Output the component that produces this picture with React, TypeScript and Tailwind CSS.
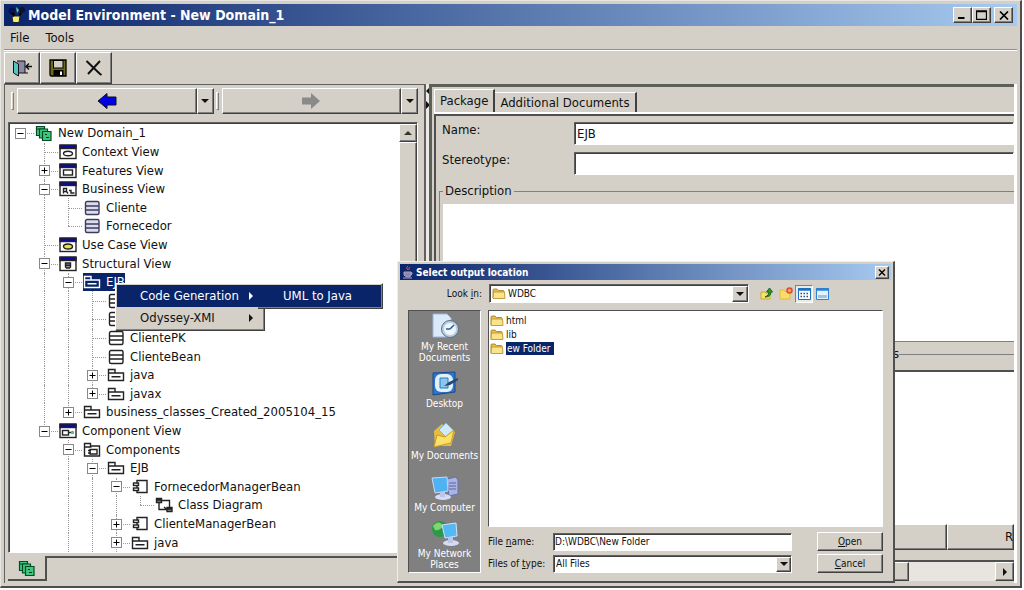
import { useState } from 'react';
import type { ReactNode } from 'react';
import { clsx } from 'clsx';

type IconName =
    | 'domain' | 'context' | 'features' | 'business' | 'usecase' | 'structural' | 'component'
    | 'entity' | 'class' | 'package' | 'components' | 'bean' | 'diagram';

interface TreeNode {
    level: number;
    icon: IconName;
    label: string;
    toggle?: '+' | '-';
    selected?: boolean;
}

const nodes: TreeNode[] = [
    { level: 0, icon: 'domain', label: 'New Domain_1', toggle: '-' },
    { level: 1, icon: 'context', label: 'Context View' },
    { level: 1, icon: 'features', label: 'Features View', toggle: '+' },
    { level: 1, icon: 'business', label: 'Business View', toggle: '-' },
    { level: 2, icon: 'entity', label: 'Cliente' },
    { level: 2, icon: 'entity', label: 'Fornecedor' },
    { level: 1, icon: 'usecase', label: 'Use Case View' },
    { level: 1, icon: 'structural', label: 'Structural View', toggle: '-' },
    { level: 2, icon: 'package', label: 'EJB', toggle: '-', selected: true },
    { level: 3, icon: 'class', label: '' },
    { level: 3, icon: 'class', label: '' },
    { level: 3, icon: 'class', label: 'ClientePK' },
    { level: 3, icon: 'class', label: 'ClienteBean' },
    { level: 3, icon: 'package', label: 'java', toggle: '+' },
    { level: 3, icon: 'package', label: 'javax', toggle: '+' },
    { level: 2, icon: 'package', label: 'business_classes_Created_2005104_15', toggle: '+' },
    { level: 1, icon: 'component', label: 'Component View', toggle: '-' },
    { level: 2, icon: 'components', label: 'Components', toggle: '-' },
    { level: 3, icon: 'package', label: 'EJB', toggle: '-' },
    { level: 4, icon: 'bean', label: 'FornecedorManagerBean', toggle: '-' },
    { level: 5, icon: 'diagram', label: 'Class Diagram' },
    { level: 4, icon: 'bean', label: 'ClienteManagerBean', toggle: '+' },
    { level: 4, icon: 'package', label: 'java', toggle: '+' },
];

// true when a later sibling exists at this level, so the guide keeps going down
function continues(index: number, level: number) {
    for (let i = index + 1; i < nodes.length; i++) {
        if (nodes[i].level < level) return false;
        if (nodes[i].level === level) return true;
    }
    // the list goes on below the visible part
    return level > 1 && level < 5;
}

const raised = 'border border-t-white border-l-white border-r-[#404040] border-b-[#404040] shadow-[inset_-1px_-1px_0_#808080] bg-[#d4d0c8]';
const sunken = 'border border-t-[#606060] border-l-[#606060] border-r-white border-b-white shadow-[inset_1px_1px_0_#404040] bg-white';

function ViewFrame({ children }: { children: ReactNode }) {
    return (
        <>
            <rect x="1" y="1.5" width="16" height="13" fill="#fff" stroke="#222" strokeWidth="1.4" />
            <rect x="1" y="1" width="16" height="3.5" fill="#0a0aa8" />
            {children}
        </>
    );
}

function DomainShapes() {
    return (
        <g stroke="#064a25" fill="#3fc77e" strokeWidth="1.2">
            <path d="M1.5 1.5h8v9h-8z M1.5 4h8" />
            <path d="M4.5 4h8v9h-8z" />
            <path d="M7.500 6.500h8.500v9h-8.500z" />
            <path d="M10 9.500h2 M11 12.500h3" stroke="#033" />
        </g>
    );
}

function TreeIcon({ name, selected }: { name: IconName; selected?: boolean }) {
    const ink = selected ? '#fff' : '#222';
    return (
        <svg width="18" height="16" viewBox="0 0 18 16" fill="none" stroke={ink} strokeWidth="1.4" className="shrink-0">
            {name === 'domain' && <DomainShapes />}
            {name === 'context' && <ViewFrame><ellipse cx="9" cy="9.500" rx="4.500" ry="2.300" /></ViewFrame>}
            {name === 'usecase' && <ViewFrame><ellipse cx="9" cy="9.500" rx="4.500" ry="2.500" fill="#e8e23a" /></ViewFrame>}
            {name === 'features' && <ViewFrame><rect x="4.500" y="7" width="9" height="5" /></ViewFrame>}
            {name === 'business' && <ViewFrame><path d="M4.500 12.500v-5h3v3h-3M7.500 10.500l1.500 2M10 9.500h2v2.500h3.500" /></ViewFrame>}
            {name === 'structural' && <ViewFrame><path d="M6.500 7h5v4l-1 1h-3l-1-1zM6.500 9.300h5" fill="#999" /></ViewFrame>}
            {name === 'component' && (
                <ViewFrame>
                    <rect x="3.500" y="7.500" width="6" height="4.500" />
                    <path d="M10 9.500h2.500" />
                    <circle cx="13.500" cy="9.500" r="1" stroke="#4b7" />
                </ViewFrame>
            )}
            {name === 'entity' && (
                <>
                    <rect x="2.500" y="1.500" width="13.500" height="13" rx="1.500" fill="#dcdcf0" stroke="#3c3c58" />
                    <path d="M2.500 6h13.500M2.500 10h13.500" stroke="#3c3c58" />
                </>
            )}
            {name === 'class' && (
                <>
                    <rect x="2.500" y="1.500" width="13.500" height="13" rx="1.500" fill="#fff" />
                    <path d="M2.500 6h13.500M2.500 10h13.500" />
                </>
            )}
            {name === 'package' && <path d="M1.500 13.500v-11h6.500v3.500h8.500v7.500zM1.500 6h7M4.500 9.700h9" />}
            {name === 'components' && (
                <>
                    <path d="M1.500 14v-12.500h6v2.500h9v10zM1.500 5h7" />
                    <path d="M7 7.500h7v4.500h-7zM5 8.500h3M5 11h3" />
                </>
            )}
            {name === 'bean' && (
                <>
                    <path d="M6 4.500v-3h10v12h-10v-2M6 6.500v2.500" />
                    <rect x="2.500" y="4" width="5" height="2.500" />
                    <rect x="2.500" y="9" width="5" height="2.500" />
                </>
            )}
            {name === 'diagram' && (
                <>
                    <path d="M1.500 1.500h5v4h-5zM1.500 3h5M12 10.500h5v4h-5zM12 12h5" fill="#888" />
                    <path d="M6.500 3.500h8v7M4 6v6.500h8M9 10l3 2.500" />
                </>
            )}
        </svg>
    );
}

function TreeRow({ node, index }: { node: TreeNode; index: number }) {
    const columns = Array.from({ length: node.level }, (_, i) => i);
    return (
        <li className="flex min-h-[18px] items-center whitespace-nowrap leading-[18px]">
            {columns.map((col) => (
                <span key={col} className="flex w-6 shrink-0 self-stretch pl-3">
                    {col > 0 && continues(index, col) && <span className="border-l border-dotted border-[#999]" />}
                </span>
            ))}
            <span className="relative flex w-6 shrink-0 items-center justify-center self-stretch">
                {node.level > 0 && (
                    <span
                        className={clsx(
                            'absolute left-3 top-0 border-l border-dotted border-[#999]',
                            continues(index, node.level) ? 'h-full' : 'h-1/2',
                        )}
                    />
                )}
                <span className="absolute left-3 top-1/2 w-4 border-t border-dotted border-[#999]" />
                {node.toggle && (
                    <button
                        type="button"
                        aria-label={node.toggle === '+' ? 'Expand' : 'Collapse'}
                        className="relative flex size-[11px] items-center justify-center border border-[#888] bg-white"
                    >
                        <svg width="7" height="7" viewBox="0 0 7 7" stroke="#000" strokeWidth="1">
                            <path d={node.toggle === '+' ? 'M0.5 3.5h6M3.5 0.5v6' : 'M0.5 3.5h6'} />
                        </svg>
                    </button>
                )}
            </span>
            <span
                className={clsx(
                    'relative ml-[3px] flex items-center gap-[5px] self-stretch',
                    node.selected ? 'bg-[#0a246a] text-white' : 'bg-white',
                )}
            >
                <TreeIcon name={node.icon} selected={node.selected} />
                {node.label}
            </span>
        </li>
    );
}

function Triangle({ dir, className }: { dir: 'up' | 'down' | 'left' | 'right'; className?: string }) {
    const paths = {
        up: 'M0 6L4 2L8 6z',
        down: 'M0 2h8L4 6z',
        left: 'M6 0v8L2 4z',
        right: 'M2 0v8L6 4z',
    };
    return (
        <svg width="8" height="8" viewBox="0 0 8 8" className={clsx('shrink-0', className)}>
            <path d={paths[dir]} fill="currentColor" />
        </svg>
    );
}

function FolderIcon() {
    return (
        <svg width="14" height="13" viewBox="0 0 14 13" className="shrink-0">
            <path d="M1 11V3q0-1 1-1h3l1.500 1.500H11q1 0 1 1V11z" fill="#e9bf4c" stroke="#a07a1c" strokeWidth=".8" />
            <path d="M1 11.500L1.500 5h11l.5 6.500z" fill="#fbe38c" stroke="#b58e2b" strokeWidth=".8" />
        </svg>
    );
}

function TitleBar() {
    return (
        <header className="flex h-[22px] items-center gap-[2px] bg-linear-to-r/srgb from-[#0a246a] to-[#a6caf0] pr-1 pl-1 text-white">
            <svg width="18" height="18" viewBox="0 0 18 18">
                <circle cx="4" cy="5" r="3.500" fill="#0c1250" />
                <circle cx="14" cy="4" r="3" fill="#101430" />
                <path d="M8 1l3 3-2 3z" fill="#5fc9a0" />
                <path d="M4 7l3 3M13 7l-2 3" stroke="#000" strokeWidth="2" />
                <path d="M4 11.500l2-1.500h6l-1 6.500h-6z" fill="#f2ee7a" stroke="#222" />
            </svg>
            <h1 className="flex-1 text-[14px] font-bold">Model Environment - New Domain_1</h1>
            <div className="flex text-black">
                <button type="button" aria-label="Minimize" className={clsx(raised, 'flex h-4 w-[19px] items-center justify-center')}>
                    <svg width="11" height="10" viewBox="0 0 11 10"><path d="M1 8h6.500" stroke="#000" strokeWidth="2" /></svg>
                </button>
                <button type="button" aria-label="Maximize" className={clsx(raised, 'flex h-4 w-[19px] items-center justify-center')}>
                    <svg width="11" height="10" viewBox="0 0 11 10" fill="none" stroke="#000"><path d="M.5 1h10v8.500H.5zM.5 1.500h10" strokeWidth="1.300" /></svg>
                </button>
                <button type="button" aria-label="Close" className={clsx(raised, 'ml-[3px] flex h-4 w-[19px] items-center justify-center')}>
                    <svg width="10" height="9" viewBox="0 0 10 9"><path d="M1 .5l8 8M9 .5l-8 8" stroke="#000" strokeWidth="1.700" /></svg>
                </button>
            </div>
        </header>
    );
}

function ToolBar() {
    return (
        <div className="flex h-[34px] border-t border-white pt-px">
            <button type="button" aria-label="Exit" className={clsx(raised, 'flex w-9 items-center justify-center')}>
                <svg width="22" height="18" viewBox="0 0 22 18">
                    <path d="M6 2h8v12H6" fill="#8a8aa8" stroke="#111" />
                    <path d="M2.500 2l5 3v12l-5-3z" fill="#53c4c4" stroke="#111" />
                    <path d="M14 14h3" stroke="#111" />
                    <path d="M15 7.500h6M18 4.500l-3 3 3 3" stroke="#111" strokeWidth="1.500" fill="none" />
                </svg>
            </button>
            <button type="button" aria-label="Save" className={clsx(raised, 'flex w-9 items-center justify-center')}>
                <svg width="18" height="18" viewBox="0 0 18 18">
                    <path d="M1 1h16v16H2l-1-1z" fill="#6b6a1e" stroke="#000" strokeWidth="1.300" />
                    <rect x="4.500" y="1.500" width="9.500" height="7.500" fill="#d4d0c8" stroke="#000" />
                    <rect x="4.500" y="11" width="10" height="6" fill="#000" />
                    <rect x="11" y="12.500" width="2" height="3.500" fill="#fff" />
                </svg>
            </button>
            <button type="button" aria-label="Delete" className={clsx(raised, 'flex w-9 items-center justify-center')}>
                <svg width="18" height="16" viewBox="0 0 18 16"><path d="M1.500 1l13 12.500 2 1.500M15 1L3 14" stroke="#111" strokeWidth="2" fill="none" /></svg>
            </button>
        </div>
    );
}

function NavButton({ forward }: { forward?: boolean }) {
    return (
        <div className="flex flex-1 gap-[3px]">
            <span className="my-1 w-[3px] border border-t-white border-l-white border-r-[#808080] border-b-[#808080]" />
            <div className="flex flex-1">
                <button type="button" aria-label={forward ? 'Forward' : 'Back'} className={clsx(raised, 'flex flex-1 items-center justify-center')}>
                    <svg width="20" height="18" viewBox="0 0 20 18">
                        {forward ? (
                            <path d="M1 5.500h9V1l9 8-9 8v-4.500H1z" fill="#8a8a8a" />
                        ) : (
                            <path d="M19 5h-9V1.500L1 9l9 7.500v-3.500h9z" fill="#0000e8" stroke="#111" />
                        )}
                    </svg>
                </button>
                <button type="button" aria-label="History" className={clsx(raised, 'flex w-[17px] items-center justify-center')}>
                    <Triangle dir="down" />
                </button>
            </div>
        </div>
    );
}

function BrowserPane() {
    return (
        <section className="flex w-[420px] shrink-0 flex-col border-t border-l border-[#606060] pt-[3px] pl-[3px]">
            <div className="mr-[6px] mb-2 flex h-[26px] gap-[2px] pl-[3px]">
                <NavButton />
                <NavButton forward />
            </div>
            <div className={clsx(sunken, 'mr-[6px] flex flex-1 pt-px')}>
                <ul className="-ml-px grid flex-1 auto-rows-fr overflow-hidden">
                    {nodes.map((node, i) => (
                        <TreeRow key={i} node={node} index={i} />
                    ))}
                </ul>
                <div className="w-[18px] bg-[#e4e1dc]">
                    <button type="button" aria-label="Scroll up" className={clsx(raised, 'flex h-[18px] w-full items-center justify-center text-[#333]')}>
                        <Triangle dir="up" />
                    </button>
                    <div className={clsx(raised, 'h-80')} />
                </div>
            </div>
            <div className="mt-[3px] flex h-[27px] items-start">
                <button type="button" aria-label="Domain" className="flex h-[25px] w-[39px] items-center justify-center border-r-2 border-b-2 border-[#505050]">
                    <svg width="18" height="16" viewBox="0 0 18 16"><DomainShapes /></svg>
                </button>
                <span className="flex-1 border-t-2 border-[#505050]" />
            </div>
        </section>
    );
}

function PropertiesPane() {
    const [name, setName] = useState('EJB');
    const [stereotype, setStereotype] = useState('');
    return (
        <section className="flex min-w-0 flex-1 flex-col border-t-3 border-l-3 border-[#5c6058] pt-[2px] pl-[2px]">
            <div role="tablist" className="flex h-[23px] items-end pr-1">
                <button type="button" role="tab" aria-selected="true" className="h-full border-t border-l border-r-2 border-t-white border-l-white border-r-[#404040] px-[5px]">
                    Package
                </button>
                <button type="button" role="tab" aria-selected="false" className="h-[20px] border-t border-r-2 border-t-white border-r-[#404040] px-[5px]">
                    Additional Documents
                </button>
            </div>
            <div className="flex flex-1 flex-col border-t-2 border-white">
                <div className="flex flex-1 flex-col border-t-2 border-l-2 border-[#505050] pt-[6px] pl-[3px]">
                    <div className="grid grid-cols-[132px_1fr] gap-y-[7px] pl-[3px]">
                        <label htmlFor="name">Name:</label>
                        <input id="name" value={name} onChange={(e) => setName(e.target.value)} className={clsx(sunken, 'h-[23px] min-w-0 rounded-none px-[2px] outline-none')} />
                        <label htmlFor="stereotype">Stereotype:</label>
                        <input id="stereotype" value={stereotype} onChange={(e) => setStereotype(e.target.value)} className={clsx(sunken, 'h-[23px] min-w-0 rounded-none px-[2px] outline-none')} />
                    </div>
                    <fieldset className="mt-2 border-t border-l border-[#808080] pl-[3px]">
                        <legend className="px-0.5 leading-[16px]">Description</legend>
                        <textarea aria-label="Description" className="mt-[5px] block h-[138px] w-full resize-none border-b border-[#808080] bg-white outline-none" />
                    </fieldset>
                    <fieldset className="mt-1 flex-1 border-t border-l border-[#808080] pl-[3px]">
                        <legend className="ml-[446px] pl-[4px] leading-[16px]">s</legend>
                        <div className="mt-2 h-[154px] border-t-2 border-[#505050] bg-white" />
                        <div className="flex h-[26px]">
                            <button type="button" aria-label="Add" className={clsx(raised, 'w-[504px]')} />
                            <button type="button" className={clsx(raised, 'flex-1 overflow-hidden pr-0 text-right')}>
                                R
                            </button>
                        </div>
                    </fieldset>
                    <div className="mb-[2px] flex h-[21px] border-t-2 border-[#505050] bg-[#e8e5e0]">
                        <div className={clsx(raised, 'w-[470px]')} />
                        <span className="flex-1" />
                        <button type="button" aria-label="Scroll right" className={clsx(raised, 'flex w-[19px] items-center justify-center')}>
                            <Triangle dir="right" />
                        </button>
                    </div>
                </div>
            </div>
        </section>
    );
}

function ContextMenu() {
    return (
        <div className="absolute top-[283px] left-[115px] flex items-start">
            <div role="menu" className={clsx(raised, 'w-[150px] p-px')}>
                <button type="button" role="menuitem" className="flex h-[22px] w-full items-center justify-between bg-[#0a246a] pr-2 pl-[23px] text-white">
                    Code Generation
                    <Triangle dir="right" />
                </button>
                <button type="button" role="menuitem" className="flex h-[22px] w-full items-center justify-between pr-2 pl-[23px]">
                    Odyssey-XMI
                    <Triangle dir="right" />
                </button>
            </div>
            <div role="menu" className={clsx(raised, '-ml-[7px] w-[125px] border-l-0 py-px pr-px')}>
                <button type="button" role="menuitem" className="h-[22px] w-full bg-[#0a246a] pl-[25px] text-left text-white">
                    UML to Java
                </button>
            </div>
        </div>
    );
}

function PlaceIcon({ name }: { name: string }) {
    return (
        <svg width="30" height="28" viewBox="0 0 30 28" className="shrink-0">
            {name === 'recent' && (
                <>
                    <path d="M3 1h14l4 4v19H3z" fill="#dce9fb" stroke="#9db5dc" />
                    <circle cx="20" cy="16" r="8.500" fill="#b9cfe2" stroke="#5a6f86" />
                    <circle cx="20" cy="16" r="6" fill="#eef6fb" />
                    <path d="M20 16l4-4M20 16h-4" stroke="#1f5fa8" strokeWidth="1.500" />
                </>
            )}
            {name === 'desktop' && (
                <>
                    <path d="M3 3l22-1v20l-22 3z" fill="#2f74c8" stroke="#174a90" />
                    <rect x="5" y="4" width="18" height="18" rx="6" fill="#dff1fb" />
                    <path d="M10 8h8v10h-8z" fill="#8cc6ea" stroke="#2b78b8" />
                    <path d="M28 8l-9 4-5 4 6-1 8-5z" fill="#24456f" />
                </>
            )}
            {name === 'documents' && (
                <>
                    <path d="M4 9l8-7 4 3 9 5-4 14H5z" fill="#e8bd3f" />
                    <path d="M9 8l7-7 8 8-5 9z" fill="#cfe9fa" stroke="#86b6da" />
                    <path d="M4 25L7 13l8 2 9-7-3 13z" fill="#fbe06a" stroke="#c79c26" />
                </>
            )}
            {name === 'computer' && (
                <>
                    <path d="M17 5l9-2 2 3v14l-9 2z" fill="#a9b4e4" stroke="#6470a8" />
                    <path d="M19 9h7M19 12h7M19 15h7" stroke="#5a64a0" />
                    <path d="M2 4l15-1 1 14-13 2z" fill="#4fb2f2" stroke="#c8d8f4" />
                    <ellipse cx="13" cy="23" rx="8" ry="3" fill="#d5dcf5" />
                    <path d="M10 18h5v5h-5z" fill="#bcc6e8" />
                </>
            )}
            {name === 'network' && (
                <>
                    <circle cx="10" cy="9" r="8" fill="#2a9a4a" />
                    <path d="M3 6q6-7 10 0-3 5-8 4z" fill="#7fd66b" />
                    <path d="M12 5l14-2 1 13-12 2z" fill="#54b8f4" stroke="#d2e3f8" />
                    <ellipse cx="21" cy="23" rx="8" ry="3" fill="#d5dcf5" />
                    <path d="M18 17h5v6h-5z" fill="#bcc6e8" />
                </>
            )}
        </svg>
    );
}

const places = [
    { icon: 'recent', label: 'My Recent Documents', box: 'h-[57px]' },
    { icon: 'desktop', label: 'Desktop', box: 'h-[52px]' },
    { icon: 'documents', label: 'My Documents', box: 'h-[52px]' },
    { icon: 'computer', label: 'My Computer', box: 'h-[46px]' },
    { icon: 'network', label: 'My Network Places', box: 'h-[52px]' },
];

function OutputDialog() {
    const [fileName, setFileName] = useState('D:\\WDBC\\New Folder');
    return (
        <div
            role="dialog"
            aria-label="Select output location"
            className="absolute top-[261px] left-[397px] w-[498px] border-t border-r-2 border-b-2 border-l border-t-[#eee] border-r-[#505050] border-b-[#505050] border-l-[#eee] bg-[#d4d0c8] p-[2px] pb-2 text-[10px] leading-[11px]"
        >
            <div className="flex h-4 items-center gap-[2px] bg-linear-to-r/srgb from-[#0a246a] to-[#a6caf0] px-[2px] text-white">
                <svg width="12" height="14" viewBox="0 0 12 14" fill="none">
                    <path d="M6 1q-3 2 0 4M8 2q-2 2-1 3" stroke="#e0553a" />
                    <path d="M2 7h7v3q0 2-3 2t-4-2zM9 7.500q2.500 0 0 2.500M1 13h9" stroke="#a9a0c8" fill="#8f86b0" />
                </svg>
                <h2 className="flex-1 font-bold">Select output location</h2>
                <button type="button" aria-label="Close dialog" className={clsx(raised, 'flex h-[13px] w-[14px] items-center justify-center')}>
                    <svg width="8" height="7" viewBox="0 0 8 7"><path d="M1 .5l6 6M7 .5l-6 6" stroke="#000" strokeWidth="1.400" /></svg>
                </button>
            </div>
            <div className="mt-1 flex h-[19px] items-center pr-2">
                <label htmlFor="look-in" className="w-[82px] text-right">
                    Look <u>i</u>n:
                </label>
                <div className="relative ml-[7px] w-[260px]">
                    <select id="look-in" className={clsx(sunken, 'h-[19px] w-full appearance-none rounded-none pl-[18px] outline-none')}>
                        <option>WDBC</option>
                    </select>
                    <span className="pointer-events-none absolute top-[3px] left-[3px]"><FolderIcon /></span>
                    <span className={clsx(raised, 'pointer-events-none absolute top-[2px] right-px flex h-4 w-4 items-center justify-center')}>
                        <Triangle dir="down" />
                    </span>
                </div>
                <div className="ml-2 flex items-center">
                    <button type="button" aria-label="Up one level" className="flex size-[19px] items-center justify-center">
                        <svg width="13" height="13" viewBox="0 0 13 13">
                            <path d="M1 5h4l1 1h4v6H1z" fill="#f5e26a" stroke="#c9a92e" />
                            <path d="M5 10q4-1 4-5H6.500L9.500 1l3 4H11q0 5-6 5z" fill="#2f9a2f" stroke="#136813" />
                        </svg>
                    </button>
                    <button type="button" aria-label="New folder" className="flex size-[19px] items-center justify-center">
                        <svg width="14" height="13" viewBox="0 0 14 13">
                            <path d="M1 3h4l1 1.500h5V12H1z" fill="#f8dc6c" stroke="#e5b840" />
                            <circle cx="10.500" cy="3.500" r="2.500" fill="#f7a070" stroke="#e04a28" strokeWidth="1.500" />
                        </svg>
                    </button>
                    <button type="button" aria-label="List" aria-pressed="true" className="flex size-[18px] items-center justify-center border border-t-[#808080] border-l-[#808080] border-r-white border-b-white bg-[#eceae6]">
                        <svg width="13" height="12" viewBox="0 0 13 12">
                            <path d="M.5.5h12v11H.5z" fill="#fff" stroke="#1e6fc0" />
                            <path d="M0 1.500h13" stroke="#1e6fc0" strokeWidth="2.500" />
                            <path d="M2.500 5.500h8M2.500 8.500h8" stroke="#1c4f8c" strokeWidth="1.500" strokeDasharray="1.500 1.500" />
                        </svg>
                    </button>
                    <button type="button" aria-label="Details" className="flex size-[19px] items-center justify-center">
                        <svg width="13" height="12" viewBox="0 0 13 12">
                            <path d="M.5.5h12v11H.5z" fill="#e4f2fd" stroke="#2f80d4" />
                            <path d="M0 1.500h13" stroke="#2f80d4" strokeWidth="2.500" />
                            <path d="M2 8.500h9" stroke="#9cc4ea" strokeWidth="3" />
                        </svg>
                    </button>
                </div>
            </div>
            <div className="mt-[7px] flex gap-[7px] pr-2 pl-2">
                <nav className="flex h-[263px] w-[73px] shrink-0 flex-col border border-t-[#505050] border-l-[#505050] border-r-white border-b-white bg-[#808080] pt-[2px]">
                    {places.map((place) => (
                        <button key={place.icon} type="button" className={clsx('flex shrink-0 flex-col items-center text-center text-white', place.box)}>
                            <PlaceIcon name={place.icon} />
                            <span className={clsx(place.label.length > 13 ? 'w-14' : 'whitespace-nowrap')}>{place.label}</span>
                        </button>
                    ))}
                </nav>
                <div className="flex min-w-0 flex-1 flex-col">
                    <ul className="h-[217px] border border-t-[#505050] border-l-[#505050] border-r-white border-b-white bg-white pt-[2px] pl-px">
                        <li className="flex h-[14px] items-center gap-[2px]"><FolderIcon />html</li>
                        <li className="flex h-[14px] items-center gap-[2px]"><FolderIcon />lib</li>
                        <li className="flex h-[14px] items-center gap-[2px]">
                            <FolderIcon />
                            <span className="border border-[#0a246a] bg-[#0a246a] pr-[2px] text-white">ew Folder</span>
                        </li>
                    </ul>
                    <div className="mt-[5px] grid grid-cols-[65px_239px_1fr] items-center gap-y-[3px]">
                        <label htmlFor="file-name">File <u>n</u>ame:</label>
                        <input id="file-name" value={fileName} onChange={(e) => setFileName(e.target.value)} className={clsx(sunken, 'h-[18px] min-w-0 rounded-none px-px outline-none')} />
                        <button type="button" className={clsx(raised, 'h-[19px] w-[66px] justify-self-end')}><u>O</u>pen</button>
                        <label htmlFor="file-type">Files of <u>t</u>ype:</label>
                        <div className="relative">
                            <select id="file-type" className={clsx(sunken, 'block h-[18px] w-full appearance-none rounded-none pl-[2px] outline-none')}>
                                <option>All Files</option>
                            </select>
                            <span className={clsx(raised, 'pointer-events-none absolute top-[2px] right-px flex h-[15px] w-[15px] items-center justify-center')}>
                                <Triangle dir="down" />
                            </span>
                        </div>
                        <button type="button" className={clsx(raised, 'h-[19px] w-[66px] justify-self-end')}><u>C</u>ancel</button>
                    </div>
                </div>
            </div>
        </div>
    );
}

export default function App() {
    return (
        <div className="relative flex min-h-screen flex-col overflow-hidden bg-white pr-[2px] pb-[2px] font-['DejaVu_Sans_Condensed','DejaVu_Sans',sans-serif] text-[13px] leading-[16px] text-[#111]">
            <div className="flex flex-1 flex-col border-t border-r-2 border-b-2 border-l border-t-[#e8e6e0] border-r-[#504c4c] border-b-[#504c4c] border-l-[#e8e6e0] bg-[#d4d0c8] p-[3px]">
                <TitleBar />
                <nav className="flex h-6 items-center gap-4 border-b border-[#909090] pl-[6px]">
                    <button type="button">File</button>
                    <button type="button">Tools</button>
                </nav>
                <ToolBar />
                <main className="flex flex-1">
                    <BrowserPane />
                    <div className="flex w-[5px] shrink-0 flex-col gap-[6px] overflow-hidden border-l-2 border-l-[#606060] bg-[#ece9e4] pt-[3px]">
                        <Triangle dir="left" className="-ml-[2px]" />
                        <Triangle dir="right" className="-ml-[2px]" />
                    </div>
                    <PropertiesPane />
                    <div className="w-[3px] bg-white" />
                </main>
            </div>
            <ContextMenu />
            <OutputDialog />
        </div>
    );
}
